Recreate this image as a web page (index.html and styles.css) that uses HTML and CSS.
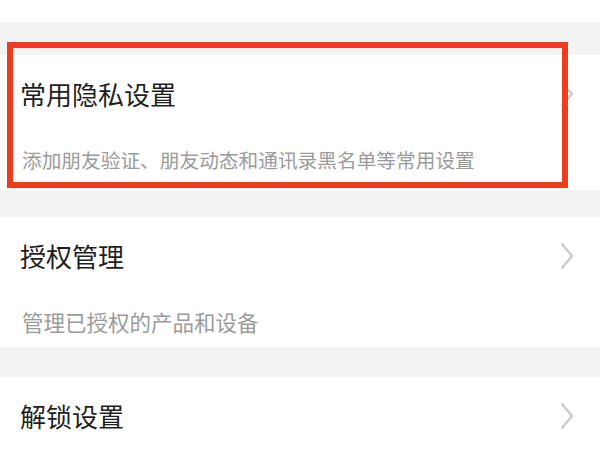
FILE: index.html
```html
<!DOCTYPE html>
<html lang="zh-CN">
<head>
<meta charset="utf-8">
<link rel="stylesheet" href="styles.css">
</head>
<body>
<div class="page">
  <div class="top-strip"><span class="top-text">隐私设置</span></div>
  <div class="gap gap-a"></div>
  <section class="card card-first">
    <div class="item-head">
      <span class="item-title">常用隐私设置</span>
      <svg class="chev" viewBox="0 0 14 26" width="14" height="26"><polyline points="2,1 12,13 2,25"/></svg>
    </div>
    <div class="item-desc">添加朋友验证、朋友动态和通讯录黑名单等常用设置</div>
  </section>
  <div class="gap gap-b"></div>
  <section class="card">
    <div class="item-head">
      <span class="item-title">授权管理</span>
      <svg class="chev" viewBox="0 0 14 26" width="14" height="26"><polyline points="2,1 12,13 2,25"/></svg>
    </div>
    <div class="item-desc item-desc-wide">管理已授权的产品和设备</div>
  </section>
  <div class="gap gap-c"></div>
  <section class="card">
    <div class="item-head">
      <span class="item-title">解锁设置</span>
      <svg class="chev" viewBox="0 0 14 26" width="14" height="26"><polyline points="2,1 12,13 2,25"/></svg>
    </div>
  </section>
  <div class="highlight"></div>
</div>
</body>
</html>
```
FILE: styles.css
```css
html, body {
  margin: 0;
  padding: 0;
  background: #ffffff;
}
body {
  font-family: "Noto Sans CJK SC", "Noto Sans", sans-serif;
  width: 600px;
  height: 450px;
  overflow: hidden;
}
.page {
  position: relative;
  width: 600px;
  height: 450px;
  overflow: hidden;
  background: #f3f3f3;
}
.top-strip {
  height: 22px;
  background: #ffffff;
  overflow: hidden;
  padding-left: 38px;
}
.top-text {
  display: block;
  margin-top: -29px;
  font-size: 22px;
  line-height: 30px;
  color: #777;
}
.gap-a { height: 33px; }
.gap-b { height: 27px; }
.gap-c { height: 30px; }
.card {
  background: #ffffff;
}
.card-first {
  padding-bottom: 5px;
}
.item-head {
  height: 80px;
  display: flex;
  align-items: center;
  justify-content: space-between;
  padding: 0 26px 0 20px;
}
.item-title {
  font-size: 26px;
  line-height: 30px;
  margin-top: -3px;
  color: #1f1f1f;
}
.chev {
  display: block;
  margin-top: -3px;
}
.chev polyline {
  fill: none;
  stroke: #c6c6c6;
  stroke-width: 2;
  stroke-linecap: round;
  stroke-linejoin: round;
}
.item-desc {
  height: 50px;
  line-height: 50px;
  padding-left: 22px;
  font-size: 19.7px;
  color: #9b9b9b;
}
.item-desc-wide {
  font-size: 21.5px;
}
.highlight {
  position: absolute;
  left: 7px;
  top: 42px;
  width: 549px;
  height: 134px;
  border: 6px solid #ee3a1d;
}
```
